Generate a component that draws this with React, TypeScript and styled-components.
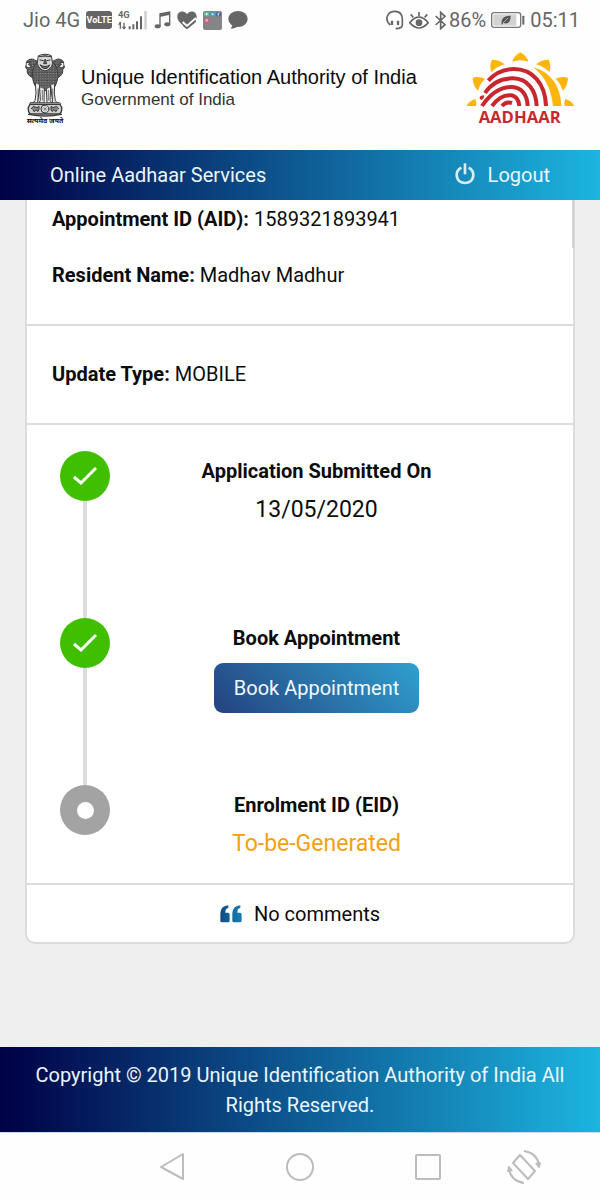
import type { ReactNode } from 'react'
import styled, { createGlobalStyle } from 'styled-components'

const GlobalStyle = createGlobalStyle`
  * {
    box-sizing: border-box;
  }

  body {
    margin: 0;
    background: #efefef;
    color: #0c0c0c;
    font-family: Roboto, 'Liberation Sans', sans-serif;
    font-size: 20px;
    line-height: 30px;
  }

  h1, h2, p, ol {
    margin: 0;
    padding: 0;
  }

  svg {
    display: block;
    flex-shrink: 0;
  }
`

const Page = styled.div`
  display: flex;
  flex-direction: column;
  min-height: 100vh;
`

const StatusBar = styled.div`
  display: flex;
  align-items: center;
  justify-content: space-between;
  height: 40px;
  padding: 0 20px 0 23px;
  background: #fefefe;
  color: #666;
`

const StatusGroup = styled.div<{ $gap: number }>`
  display: flex;
  align-items: center;
  gap: ${({ $gap }) => $gap}px;
`

const VolteBadge = styled.span`
  width: 26px;
  height: 18px;
  border-radius: 3px;
  background: #666;
  color: #fff;
  font-size: 9px;
  font-weight: 700;
  line-height: 18px;
  text-align: center;
`

const Header = styled.header`
  display: flex;
  align-items: center;
  height: 110px;
  padding: 0 20px 10px 24px;
  background: #fefefe;
`

const EmblemBox = styled.div`
  display: flex;
  flex-direction: column;
  align-items: center;
  width: 42px;
`

const Motto = styled.span`
  font-family: 'Noto Sans Devanagari', 'Noto Sans', sans-serif;
  font-size: 7px;
  font-weight: 700;
  line-height: 10px;
  white-space: nowrap;
`

const Titles = styled.div`
  flex: 1;
  padding: 0 0 4px 15px;
  font-family: 'Liberation Sans', Arial, sans-serif;
`

const Authority = styled.h1`
  font-size: 20px;
  font-weight: 400;
  line-height: 24px;
`

const Government = styled.p`
  color: #333;
  font-size: 17px;
  line-height: 22px;
`

const ServiceBar = styled.nav`
  display: flex;
  align-items: center;
  justify-content: space-between;
  height: 50px;
  padding: 0 50px;
  background: linear-gradient(90deg, #000046, #1cb5e0);
  color: #eaf6fc;
`

const LogoutLink = styled.a`
  display: flex;
  align-items: center;
  gap: 13px;
  color: inherit;
  text-decoration: none;
`

const Content = styled.main`
  position: relative;
  flex: 1;
  padding: 0 25px 100px;
`

const ScrollThumb = styled.div`
  position: absolute;
  top: 0;
  right: 26px;
  width: 2px;
  height: 48px;
  background: #d4d4d4;
`

const Card = styled.section`
  border: 2px solid #dcdcdc;
  border-top: 0;
  border-radius: 0 0 10px 10px;
  background: #fff;
`

const Details = styled.div<{ $top: number }>`
  display: flex;
  flex-direction: column;
  gap: 26px;
  padding: ${({ $top }) => $top}px 25px 34px;
  border-bottom: 2px solid #dcdcdc;
`

const Steps = styled.ol`
  padding: 26px 50px 0 33px;
  border-bottom: 2px solid #dcdcdc;
  list-style: none;
`

const StepItem = styled.li`
  display: grid;
  grid-template-columns: 50px 1fr;
  min-height: 167px;

  &:last-child {
    min-height: 98px;
  }
`

const Track = styled.div`
  display: flex;
  flex-direction: column;
  align-items: center;
`

const Marker = styled.span<{ $done: boolean }>`
  display: flex;
  align-items: center;
  justify-content: center;
  width: 50px;
  height: 50px;
  border-radius: 50%;
  background: ${({ $done }) => ($done ? '#40bf00' : '#a3a3a3')};
`

const Hole = styled.span`
  width: 17px;
  height: 17px;
  border-radius: 50%;
  background: #fff;
`

const Connector = styled.span`
  flex: 1;
  width: 4px;
  background: #dcdcdc;
`

const StepBody = styled.div`
  display: flex;
  flex-direction: column;
  align-items: center;
  gap: 10px;
  padding-top: 5px;
`

const StepTitle = styled.h2`
  font-size: 20px;
  font-weight: 700;
`

const StepValue = styled.p<{ $pending?: boolean }>`
  color: ${({ $pending }) => ($pending ? '#f5a010' : 'inherit')};
  font-size: 23px;
  line-height: 28px;
`

const BookButton = styled.button`
  height: 50px;
  padding: 0 20px;
  border: 0;
  border-radius: 9px;
  background: linear-gradient(45deg, #24427f, #2fa0cf);
  color: #f2f9fd;
  font: inherit;
`

const Comments = styled.div`
  display: flex;
  align-items: center;
  justify-content: center;
  gap: 12px;
  height: 57px;
`

const Footer = styled.footer`
  padding: 13px 30px 12px;
  background: linear-gradient(90deg, #000046, #1cb5e0);
  color: #eaf6fc;
  text-align: center;
`

const SystemNav = styled.div`
  display: grid;
  grid-template-columns: 27fr 32fr 32fr 32fr 27fr;
  align-items: center;
  height: 68px;
  border-top: 1px solid #c5dcea;
  background: #fefefe;
`

const NavButton = styled.button<{ $column: number }>`
  grid-column: ${({ $column }) => $column};
  justify-self: ${({ $column }) => ($column === 5 ? 'start' : 'center')};
  padding: 0 ${({ $column }) => ($column === 5 ? '15px' : '0')};
  border: 0;
  background: none;
`

function SignalIcon() {
  return (
    <svg width="30" height="20" viewBox="0 0 90 60" fill="#666">
      <text x="0" y="23" fontFamily="Roboto, sans-serif" fontSize="28" fontWeight="700">4G</text>
      <path d="M7 36v20M18 38v18" stroke="#666" strokeWidth="4" />
      <path d="M0 44l7-10v10zM11 50h14l-7 9z" />
      <path d="M32 49h6v9h-6zM43 43h6v15h-6zM54 34h6v24h-6zM66 19h6v39h-6z" />
      <path d="M79 3h7v55h-7z" fill="#ccc" />
    </svg>
  )
}

function MusicIcon() {
  return (
    <svg width="17" height="18" viewBox="0 0 51 54" fill="#666">
      <path d="M16 7L49 1v39h-4V12L20 17v29h-4z" />
      <ellipse cx="11" cy="46" rx="9" ry="6" />
      <ellipse cx="40" cy="40" rx="9" ry="6" />
    </svg>
  )
}

function HeartIcon() {
  return (
    <svg width="20" height="18" viewBox="0 0 60 54">
      <path d="M30 52C15 41 1 31 1 17C1 0 22-4 30 10C38-4 59 0 59 17C59 31 45 41 30 52z" fill="#666" />
      <path d="M17 33l13 12 27-24" fill="none" stroke="#fefefe" strokeWidth="6" />
      <path d="M19 43l11 9 26-22" fill="none" stroke="#666" strokeWidth="5" />
    </svg>
  )
}

function FolderIcon() {
  return (
    <svg width="19" height="19" viewBox="0 0 57 57">
      <rect width="57" height="57" rx="6" fill="#858585" />
      <rect x="4" y="3" width="14" height="13" rx="4" fill="#55c98b" />
      <circle cx="11" cy="9" r="3" fill="#fff" />
      <rect x="22" y="3" width="14" height="13" rx="4" fill="#35a7df" />
      <path d="M25 7l8 2-5 4z" fill="#fff" />
      <rect x="40" y="3" width="14" height="13" rx="4" fill="#3f609f" />
      <path d="M50 5q-4-1-4 4v6M43 9h6" fill="none" stroke="#fff" strokeWidth="2" />
      <rect x="4" y="22" width="14" height="13" rx="4" fill="#e34f8a" />
      <circle cx="11" cy="28" r="3" fill="none" stroke="#fff" strokeWidth="2" />
    </svg>
  )
}

function ChatIcon() {
  return (
    <svg width="20" height="18" viewBox="0 0 60 54" fill="#666">
      <ellipse cx="30" cy="24" rx="29" ry="24" />
      <path d="M13 36c1 8-2 13-5 17c10 0 18-4 22-9z" />
    </svg>
  )
}

function HeadsetIcon() {
  return (
    <svg width="18" height="20" viewBox="0 0 54 60" fill="none" stroke="#666" strokeWidth="5">
      <path d="M13 45C-7 28 5 4 27 4C45 4 50 18 49 32v12q0 11-20 12" />
      <path d="M18 32v13M36 32v13" strokeWidth="7" />
    </svg>
  )
}

function EyeIcon() {
  return (
    <svg width="20" height="19" viewBox="0 0 60 57" fill="none" stroke="#666" strokeWidth="5">
      <path d="M2 35Q30 2 58 35Q30 67 2 35z" />
      <circle cx="30" cy="35" r="10" fill="#666" stroke="none" />
      <path d="M30 3v12M5 10l8 9M55 10l-8 9" />
    </svg>
  )
}

function BluetoothIcon() {
  return (
    <svg width="13" height="19" viewBox="0 0 39 57" fill="none" stroke="#666" strokeWidth="5">
      <path d="M5 15l28 26-13 12V4l13 12L5 42" />
    </svg>
  )
}

function BatteryIcon() {
  return (
    <svg width="34" height="16" viewBox="0 0 102 48">
      <rect x="2" y="2" width="87" height="44" rx="7" fill="#fff" stroke="#777" strokeWidth="4" />
      <rect x="7" y="7" width="69" height="34" fill="#d2d2d2" />
      <path d="M32 37c-2-15 4-26 27-26c0 18-7 27-22 22l-4 5z" fill="#555" />
      <path d="M36 33l15-15" stroke="#d2d2d2" strokeWidth="2" />
      <rect x="94" y="11" width="6" height="27" rx="2" fill="#666" />
    </svg>
  )
}

function Emblem() {
  return (
    <svg width="42" height="64" viewBox="44 36 124 192" fill="none" stroke="#3a3a3a" strokeLinecap="round">
      <defs>
        <pattern id="mane" width="8" height="8" patternUnits="userSpaceOnUse">
          <rect width="8" height="8" fill="#a5a5a5" />
          <path d="M0 1l4 5 4-5M0 8l4-3 4 3" stroke="#303030" strokeWidth="2" />
        </pattern>
      </defs>
      <path d="M66 54Q48 56 50 70Q44 80 53 86Q50 100 66 109L84 92L84 62z" fill="url(#mane)" strokeWidth="3" />
      <path d="M146 54Q164 56 162 70Q168 80 159 86Q162 100 146 109L128 92L128 62z" fill="url(#mane)" strokeWidth="3" />
      <path d="M51 65l10-2-4 8 8 4-7 6-7-3M161 65l-10-2 4 8-8 4 7 6 7-3" fill="#eee" strokeWidth="3" />
      <path d="M84 62Q67 76 68 104Q71 133 83 143Q106 155 130 143Q142 132 145 104Q145 76 128 62z" fill="url(#mane)" strokeWidth="3" />
      <path d="M87 44Q106 35 125 44L129 68Q124 86 106 90Q88 86 83 68z" fill="#d5d5d5" strokeWidth="3" />
      <path d="M88 47Q106 41 124 47M91 57l10 2M121 57l-10 2M106 56l-4 12h8zM92 72Q106 81 120 72Q116 83 106 83Q96 83 92 72" fill="#666" strokeWidth="3" />
      <path d="M77 126l2 30-3 23q-3 6-10 7h18l6-53M90 139l2 39-4 8h15l1-42M110 144l2 42h14l-5-8 2-39M135 129l-1 27 3 23q3 6 10 7h-18l-6-53" fill="#eee" strokeWidth="3" />
      <path d="M85 144v34M98 148v29M116 148v29M129 144v34" strokeWidth="2" />
      <rect x="60" y="185" width="93" height="7" rx="3" fill="#bbb" strokeWidth="2" />
      <path d="M61 190Q50 204 61 219H151Q162 204 151 190z" fill="#d0d0d0" strokeWidth="4" />
      <circle cx="106" cy="204" r="12" fill="#e6e6e6" strokeWidth="3" />
      <path d="M106 193v22M95 204h22M98 196l16 16M114 196l-16 16" strokeWidth="1" />
      <path d="M65 203l6-7 11 4 6-4v10l-4 6-4-6-7 6-3-6M147 203l-6-7-11 4-6-4v10l4 6 4-6 7 6 3-6" fill="#888" strokeWidth="3" />
      <path d="M57 220Q106 230 155 220" strokeWidth="4" />
    </svg>
  )
}

function AadhaarLogo() {
  return (
    <svg width="114" height="76" viewBox="32 26 342 228" role="img" aria-label="Aadhaar">
      <g fill="#fbb60d">
        <path d="M195 27Q215 38 219 55Q195 46 171 55Q175 38 195 27z" />
        <path d="M110 49Q134 49 148 63Q124 70 108 86Q101 68 110 49z" />
        <path d="M280 49Q256 49 242 63Q266 70 282 86Q289 68 280 49z" />
        <path d="M52 103Q72 98 89 106Q73 122 68 143Q52 126 52 103z" />
        <path d="M338 103Q318 98 301 106Q317 122 322 143Q338 126 338 103z" />
        <path d="M33 188Q42 172 60 167Q65 178 62 188z" />
        <path d="M357 188Q348 172 330 167Q325 178 328 188z" />
        <path d="M234 72Q314 96 318 188H293Q285 112 234 72z" />
      </g>
      <g fill="none" stroke="#c8282d" strokeWidth="12">
        <path d="M99 112Q130 77 175 77C232 77 270 121 272 188" />
        <path d="M89 149Q119 104 173 105C218 106 242 141 244 188" />
        <path d="M80 188Q119 130 170 131C199 132 216 155 217 188" />
        <path d="M110 188Q136 152 169 156Q189 160 192 188" />
        <path d="M140 188Q152 173 170 179" />
      </g>
      <path d="M73 166q-1-10 14-10q-2 13-9 14z" fill="#c8282d" />
      <text x="193" y="240" textAnchor="middle" fill="#c8282d" fontFamily="Open Sans, sans-serif" fontSize="50" fontWeight="700">
        AADHAAR
      </text>
    </svg>
  )
}

function PowerIcon() {
  return (
    <svg width="20" height="24" viewBox="0 0 60 72" fill="none" stroke="#d9edf7" strokeWidth="8">
      <path d="M19 14C-3 26 2 60 30 60S63 26 41 14" />
      <path d="M30 1v33" />
    </svg>
  )
}

function CheckIcon() {
  return (
    <svg width="24" height="20" viewBox="0 0 24 20" fill="none" stroke="#fff" strokeWidth="3">
      <path d="M1 11l7 6L23 2" />
    </svg>
  )
}

function QuoteIcon() {
  return (
    <svg width="22" height="18" viewBox="0 0 66 54">
      <defs>
        <linearGradient id="quote" x1="0" x2="1">
          <stop offset="0" stopColor="#104b80" />
          <stop offset="1" stopColor="#197eb3" />
        </linearGradient>
      </defs>
      <path
        d="M25 1v8q-9 1-9 14h8q5 0 5 5v19q0 5-5 5H6q-5 0-5-5V25Q2 3 25 1zM61 1v8q-9 1-9 14h8q5 0 5 5v19q0 5-5 5H42q-5 0-5-5V25Q38 3 61 1z"
        fill="url(#quote)"
      />
    </svg>
  )
}

const navIcons = [
  {
    label: 'Back',
    width: 26,
    shape: <path d="M24 2v25L2 15z" />,
  },
  {
    label: 'Home',
    width: 30,
    shape: <circle cx="15" cy="15" r="13" />,
  },
  {
    label: 'Recent apps',
    width: 26,
    shape: <rect x="1" y="3" width="24" height="24" rx="1" />,
  },
  {
    label: 'Rotate screen',
    width: 34,
    shape: (
      <>
        <path d="M13 3L28 19L21 27L6 11z" />
        <path d="M17-1Q30 1 32 13M29 11l3 4 1-5M17 31Q4 29 2 17M5 19l-3-4-1 5" />
      </>
    ),
  },
]

interface StepProps {
  title: string
  done?: boolean
  last?: boolean
  children: ReactNode
}

function Step({ title, done = false, last = false, children }: StepProps) {
  return (
    <StepItem>
      <Track>
        <Marker $done={done}>{done ? <CheckIcon /> : <Hole />}</Marker>
        {!last && <Connector />}
      </Track>
      <StepBody>
        <StepTitle>{title}</StepTitle>
        {children}
      </StepBody>
    </StepItem>
  )
}

export default function App() {
  return (
    <Page>
      <GlobalStyle />
      <StatusBar>
        <StatusGroup $gap={6}>
          <span>Jio 4G</span>
          <VolteBadge>VoLTE</VolteBadge>
          <SignalIcon />
          <MusicIcon />
          <HeartIcon />
          <FolderIcon />
          <ChatIcon />
        </StatusGroup>
        <StatusGroup $gap={5}>
          <HeadsetIcon />
          <EyeIcon />
          <StatusGroup $gap={2}>
            <BluetoothIcon />
            <span>86%</span>
          </StatusGroup>
          <BatteryIcon />
          <span>05:11</span>
        </StatusGroup>
      </StatusBar>

      <Header>
        <EmblemBox>
          <Emblem />
          <Motto>सत्यमेव जयते</Motto>
        </EmblemBox>
        <Titles>
          <Authority>Unique Identification Authority of India</Authority>
          <Government>Government of India</Government>
        </Titles>
        <AadhaarLogo />
      </Header>

      <ServiceBar>
        <span>Online Aadhaar Services</span>
        <LogoutLink href="#logout">
          <PowerIcon />
          Logout
        </LogoutLink>
      </ServiceBar>

      <Content>
        <Card>
          <Details $top={4}>
            <p><b>Appointment ID (AID):</b> 1589321893941</p>
            <p><b>Resident Name:</b> Madhav Madhur</p>
          </Details>
          <Details $top={33}>
            <p><b>Update Type:</b> MOBILE</p>
          </Details>
          <Steps>
            <Step title="Application Submitted On" done>
              <StepValue>13/05/2020</StepValue>
            </Step>
            <Step title="Book Appointment" done>
              <BookButton type="button">Book Appointment</BookButton>
            </Step>
            <Step title="Enrolment ID (EID)" last>
              <StepValue $pending>To-be-Generated</StepValue>
            </Step>
          </Steps>
          <Comments>
            <QuoteIcon />
            <span>No comments</span>
          </Comments>
        </Card>
        <ScrollThumb />
      </Content>

      <Footer>
        <p>Copyright © 2019 Unique Identification Authority of India All Rights Reserved.</p>
      </Footer>

      <SystemNav>
        {navIcons.map(({ label, width, shape }, index) => (
          <NavButton key={label} type="button" aria-label={label} $column={index + 2}>
            <svg
              width={width}
              height="34"
              viewBox={`0 -2 ${width} 34`}
              fill="none"
              stroke="#bcbcbc"
              strokeWidth="2"
              strokeLinejoin="round"
            >
              {shape}
            </svg>
          </NavButton>
        ))}
      </SystemNav>
    </Page>
  )
}
